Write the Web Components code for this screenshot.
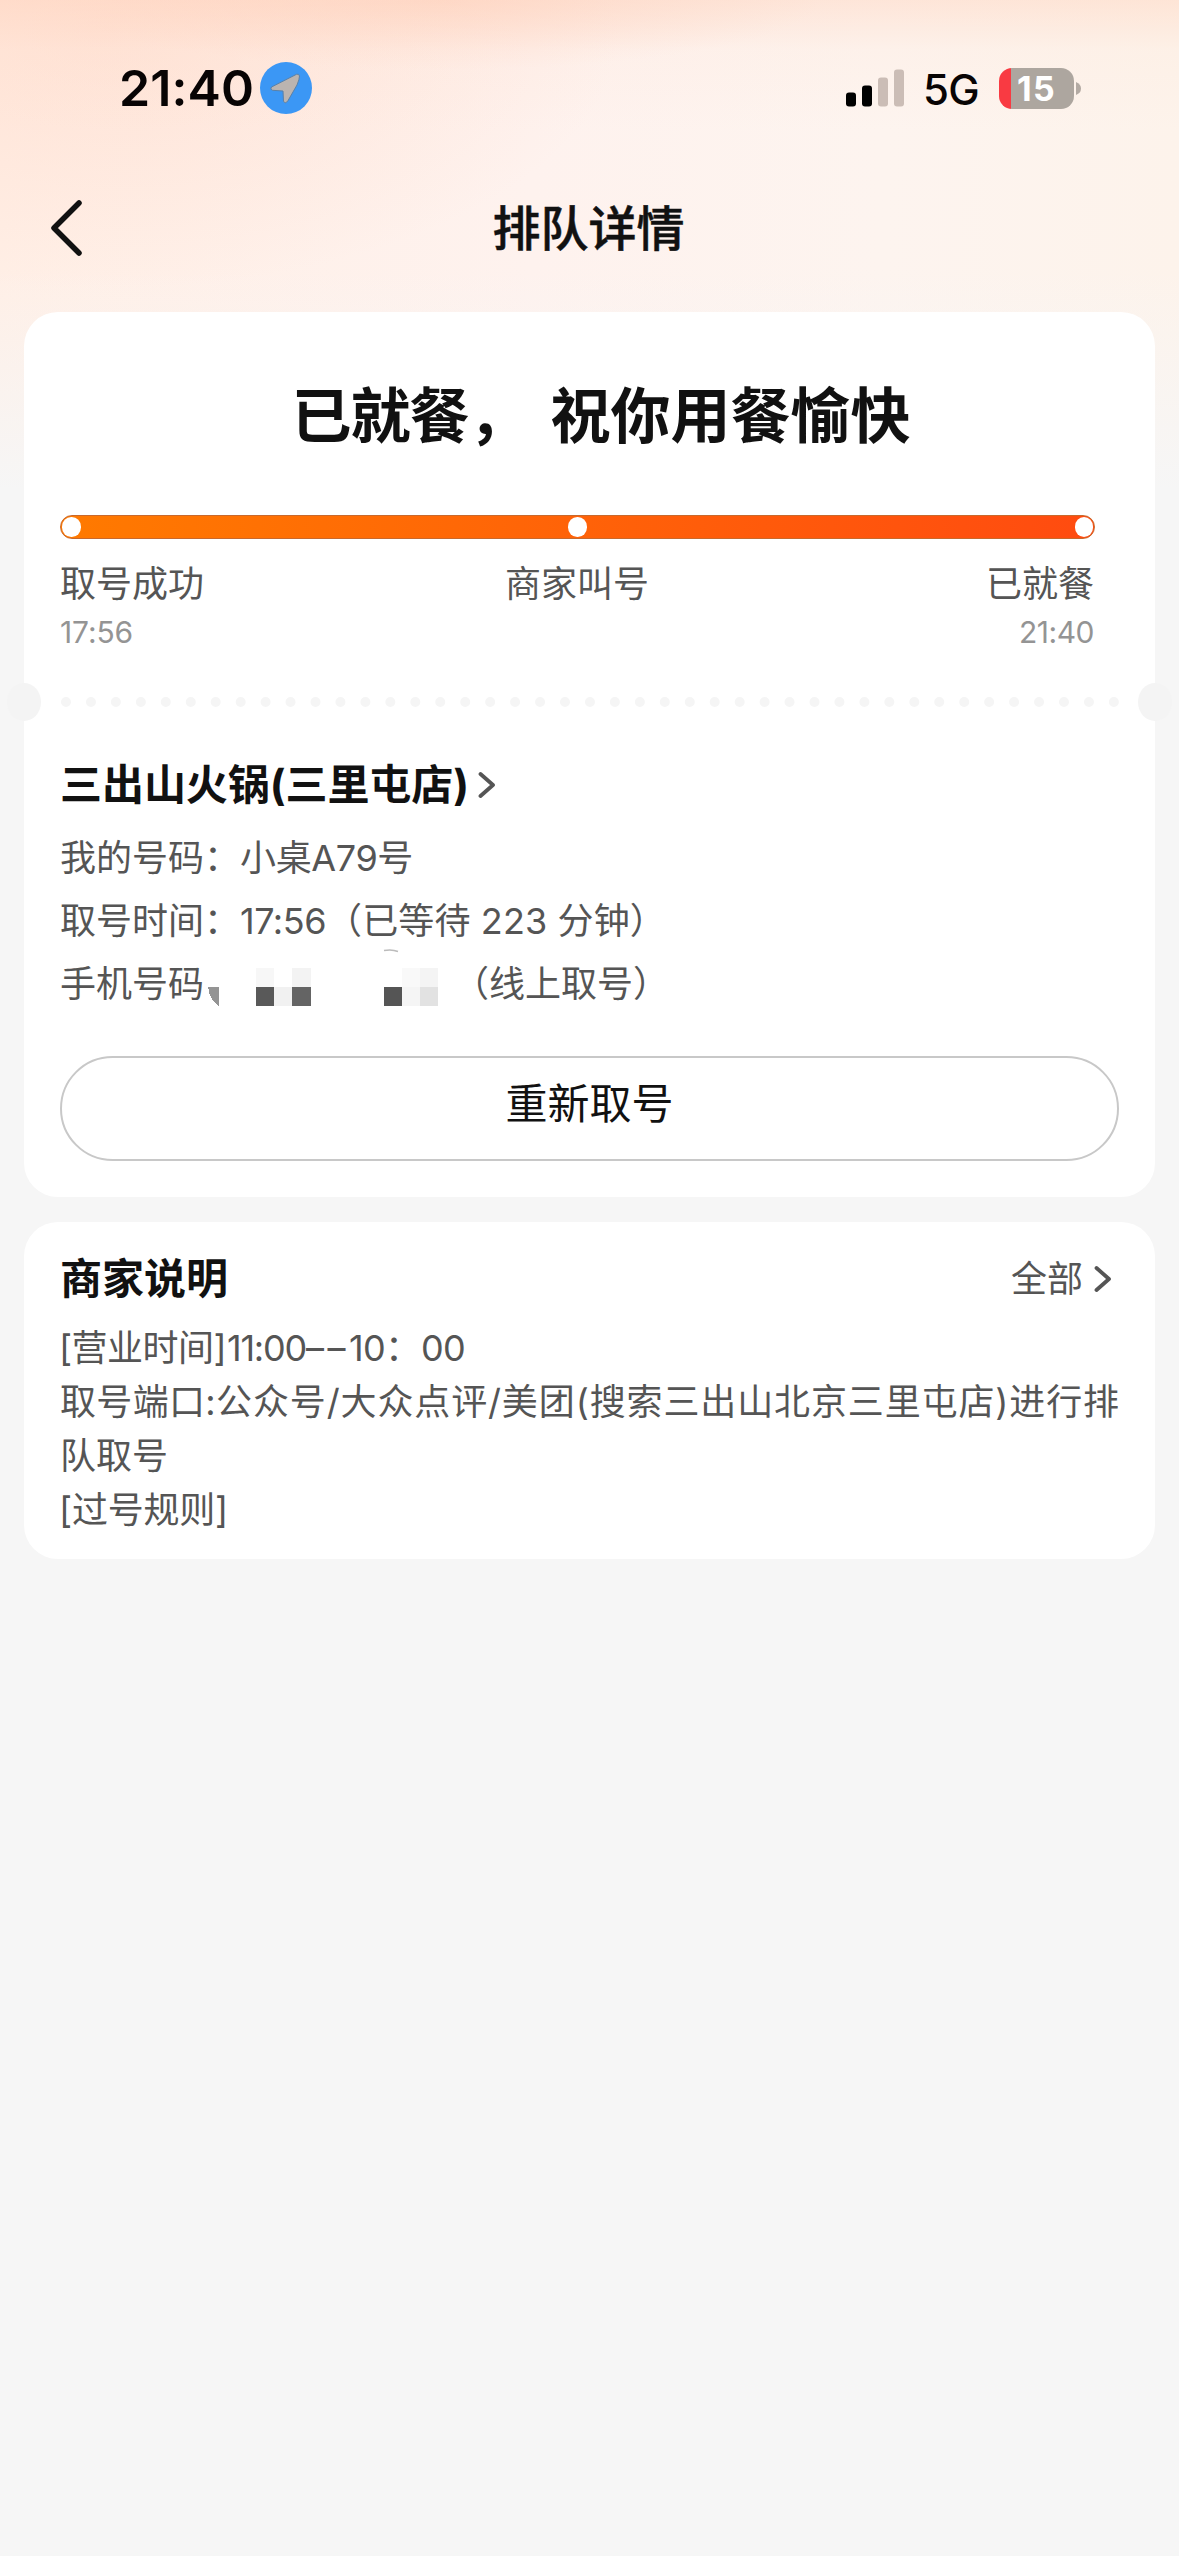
<!DOCTYPE html>
<html lang="zh-CN">
<head>
<meta charset="utf-8">
<title>排队详情</title>
<style>
html,body{margin:0;padding:0}
body{width:1179px;min-height:2556px;background:#f6f6f6;color:#111;font-family:Inter,"Noto Sans CJK SC",sans-serif;overflow-x:hidden}
</style>
</head>
<body>
<queue-page></queue-page>
<script>
const define=(name,html,setup)=>customElements.define(name,class extends HTMLElement{
  constructor(){super();this.attachShadow({mode:'open'}).innerHTML=html}
  connectedCallback(){if(setup)setup(this)}
});

/* One run of text whose tracking is spread to fill a given width */
define('fit-text','<style>:host{display:inline-block;white-space:pre;flex:none}</style><span><slot></slot></span>',el=>{
  const span=el.shadowRoot.querySelector('span');
  const want=parseFloat(el.getAttribute('w'));
  const n=[...el.textContent].length;
  const have=span.getBoundingClientRect().width;
  el.style.letterSpacing=((want-have)/n).toFixed(3)+'px';
  el.style.width=want+'px';
});

define('status-bar',`<style>
:host{display:flex;height:176px;align-items:center;justify-content:space-between;padding:0 98px 0 119px;box-sizing:border-box;color:#080404}
.l,.r{display:flex;align-items:center}
.time{font-size:50px;font-weight:600;line-height:60px}
.loc{width:52px;height:52px;margin-left:6px}
.sig{width:58px;height:38px;margin-right:19px}
.net{font-size:42px;font-weight:500;line-height:50px;margin-right:20px;padding-top:3px}
.bat{width:75px;height:41px;border-radius:13px;background:linear-gradient(90deg,#f93a42 11.5px,#ada69f 11.5px);display:flex;align-items:center;justify-content:center;font-size:34px;font-weight:700;line-height:41px;color:#fff}
.nub{width:5px;height:13px;margin-left:2px}
</style>
<div class="l"><fit-text class="time" w="135">21:40</fit-text>
<svg class="loc" viewBox="0 0 52 52"><circle cx="26" cy="26" r="26" fill="#3b97f5"/><path d="M36.500 12.300L11.500 25Q9.500 27.500 12.500 28.300L23 29L23.500 39.500Q25 42 27.500 39.500L37 23Q39.500 17 39.500 14Q39 11.500 36.500 12.300Z" fill="#bbb4b0" stroke="#5a81a8" stroke-width="1"/></svg></div>
<div class="r"><svg class="sig" viewBox="0 0 58 38"><g fill="#000"><rect x="0" y="23.500" width="10" height="14" rx="3"/><rect x="16" y="16.500" width="10" height="21" rx="3"/></g><g fill="#cbbdb6"><rect x="32" y="8.500" width="10" height="29" rx="3"/><rect x="48" y="0.500" width="10" height="37" rx="3"/></g></svg>
<fit-text class="net" w="56">5G</fit-text><div class="bat"><fit-text w="39">15</fit-text></div>
<svg class="nub" viewBox="0 0 5 13"><path d="M0 0Q5 2 5 6.500Q5 11 0 13Z" fill="#b3aaa3"/></svg></div>`);

define('nav-bar',`<style>
:host{display:grid;grid-template-columns:1fr auto 1fr;height:104px;align-items:center;padding:0 51px 0 49px;box-sizing:border-box}
svg{width:34px;height:58px;display:block}
.t{font-size:48px;font-weight:500;line-height:64px;padding-top:1px;-webkit-text-stroke:.5px #111}
</style><svg viewBox="0 0 34 58"><path d="M30 4L5 29L30 54" fill="none" stroke="#111" stroke-width="5.500" stroke-linecap="round" stroke-linejoin="round"/></svg>
<div class="t"><slot></slot></div>`);

define('ui-card',`<style>:host{display:block;box-sizing:border-box;margin:0 24px;padding:0 36px;background:#fff;border-radius:34px}</style><slot></slot>`);

define('queue-progress',`<style>
:host{display:block;width:1035px}
.bar{height:24px;border-radius:12px;box-sizing:border-box;padding:0 1px;border:1.5px solid #c8692d;background:linear-gradient(90deg,#ff7a00,#ff4b10) border-box;display:flex;align-items:center;justify-content:space-between}
i{width:18.500px;height:19.500px;border-radius:50%;background:#fff}
.g{display:grid;grid-template-columns:1fr 1fr 1fr;margin-top:20px;font-size:36px;line-height:50px;color:#555}
.g>*:nth-child(2){text-align:center}.g>*:nth-child(3){text-align:right}
.g,.tm{margin-right:1px}
.tm{display:flex;justify-content:space-between;margin-top:2px;font-size:30px;line-height:42px;color:#949494}
</style><div class="bar"><i></i><i></i><i></i></div>
<div class="g"><span>取号成功</span><span>商家叫号</span><span>已就餐</span></div>
<div class="tm"><fit-text w="73">17:56</fit-text><fit-text w="75">21:40</fit-text></div>`);

define('ticket-tear',`<style>
:host{display:flex;align-items:center;justify-content:space-between;height:40px;margin:29px -53px 0}
b{width:34px;height:38px;border-radius:50%;background:#f4f4f4}
svg{width:1058px;height:12px}
</style><b></b><svg viewBox="0 0 1058 12"><path d="M5 6H1054" stroke="#f5f5f5" stroke-width="10" stroke-linecap="round" stroke-dasharray="0 24.950"/></svg><b></b>`);

define('chevron-right',`<style>:host{display:block;width:18px;height:28px;color:#555}svg{display:block}</style>
<svg width="18" height="28" viewBox="0 0 18 28"><path d="M2.500 3L15 14L2.500 25" fill="none" stroke="currentColor" stroke-width="3.800" stroke-linecap="round" stroke-linejoin="round"/></svg>`);

define('masked-number',`<style>:host{display:block;width:248px;height:63px;white-space:normal;line-height:0}svg{display:block;margin-top:-2px}</style><svg width="248" height="63" viewBox="0 0 248 63" shape-rendering="crispEdges" overflow="visible">
<path d="M4 36H15V55Q6 50 4 36Z" fill="#949494"/>
<rect x="52" y="17" width="18" height="19" fill="#f7f7f7"/><rect x="88" y="17" width="19" height="19" fill="#f3f3f3"/>
<rect x="52" y="36" width="18" height="19" fill="#595959"/><rect x="70" y="36" width="18" height="19" fill="#f1f1f1"/><rect x="88" y="36" width="19" height="19" fill="#646464"/>
<rect x="198" y="17" width="18" height="19" fill="#f9f9f9"/><rect x="216" y="17" width="18" height="19" fill="#f4f4f4"/>
<rect x="180" y="36" width="18" height="19" fill="#555"/><rect x="198" y="36" width="18" height="19" fill="#f5f5f5"/><rect x="216" y="36" width="18" height="19" fill="#e2e2e2"/>
<path d="M180 -0.500Q188 -2 194 0.500" fill="none" stroke="#bbb" stroke-width="1.500" shape-rendering="auto"/>
</svg>`);

define('shop-info',`<style>
:host{display:block}
.n{display:flex;align-items:center;margin-top:34px;line-height:58px;font-size:42px;font-weight:700}
.n chevron-right{margin-left:9px}
.rows{padding-top:13px}
.row{display:flex;height:63px;line-height:63px;font-size:36px;color:#555;white-space:pre}
</style>
<div class="n"><fit-text w="409">三出山火锅(三里屯店)</fit-text><chevron-right></chevron-right></div>
<div class="rows">
<div class="row"><fit-text w="180">我的号码\uFF1A</fit-text><fit-text w="173">小桌A79号</fit-text></div>
<div class="row"><fit-text w="180">取号时间\uFF1A</fit-text><fit-text w="86">17:56</fit-text><fit-text w="340">\uFF08已等待 223 分钟\uFF09</fit-text></div>
<div class="row"><span>手机号码</span><masked-number></masked-number><fit-text style="margin-left:1px" w="216">\uFF08线上取号\uFF09</fit-text></div>
</div>`);

define('pill-button',`<style>:host{display:flex;justify-content:center;box-sizing:border-box;height:105px;border:2px solid #c8c8c8;border-radius:53px;font-size:42px;line-height:92px;color:#111}</style><slot></slot>`);

define('merchant-note',`<style>
:host{display:block;padding:27px 0 22px}
.h{display:flex;justify-content:space-between;align-items:center;line-height:60px;font-size:42px;font-weight:700}
.all{display:flex;align-items:center;gap:11px;font-size:36px;font-weight:400;color:#555;padding-right:7px}
.b{margin-top:12px;font-size:36px;line-height:54px;color:#555}
.b>div{display:flex;height:54px}
.b .k{margin:0 1px 0 -1px}
</style>
<div class="h"><span>商家说明</span><div class="all"><span>全部</span><chevron-right></chevron-right></div></div>
<div class="b">
<div><fit-text class="k" w="167">[营业时间]</fit-text><fit-text w="79">11:00</fit-text><fit-text w="43">––</fit-text><fit-text w="36">10</fit-text><fit-text w="36">\uFF1A</fit-text><fit-text w="44">00</fit-text></div>
<div><fit-text w="156">取号端口:</fit-text><fit-text w="904">公众号/大众点评/美团(搜索三出山北京三里屯店)进行排</fit-text></div>
<div><span>队取号</span></div>
<div><fit-text class="k" w="169">[过号规则]</fit-text></div>
</div>`);

define('queue-page',`<style>
:host{display:block;width:1179px;min-height:2556px;background:
 linear-gradient(180deg,transparent 270px,#f6f6f6 490px),
 linear-gradient(180deg,rgba(255,205,180,.38),rgba(255,220,200,.12) 50px,transparent 130px),
 radial-gradient(520px 260px at 100px 30px,rgba(255,208,188,.42),transparent),
 radial-gradient(380px 70px at 440px 0,rgba(255,200,175,.4),transparent),
 linear-gradient(90deg,#ffefe6,#fef2ee 45%,#fdf4ef 75%,#fdf3eb) #f6f6f6}
h1{margin:0;padding:62px 0 57px 23px;display:flex;justify-content:center;font-size:60px;line-height:84px;font-weight:700;color:#111}
.gap{height:32px}
pill-button{margin-top:40px}
.first{padding-bottom:36px;margin-bottom:25px}
</style>
<status-bar></status-bar>
<nav-bar>排队详情</nav-bar>
<div class="gap"></div>
<ui-card class="first">
<h1><fit-text w="177">已就餐</fit-text><fit-text w="82">\uFF0C </fit-text><fit-text w="360">祝你用餐愉快</fit-text></h1>
<queue-progress></queue-progress>
<ticket-tear></ticket-tear>
<shop-info></shop-info>
<pill-button>重新取号</pill-button>
</ui-card>
<ui-card><merchant-note></merchant-note></ui-card>`);
</script>
</body>
</html>
